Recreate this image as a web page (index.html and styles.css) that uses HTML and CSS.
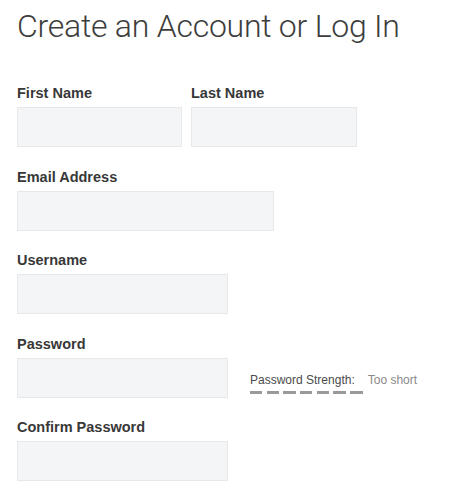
FILE: index.html
```html
<!DOCTYPE html>
<html lang="en">
<head>
<meta charset="utf-8">
<title>Create an Account or Log In</title>
<link rel="stylesheet" href="styles.css">
</head>
<body>
<div class="page">
  <h1 class="title">Create an Account or Log In</h1>
  <form class="form">
    <div class="row">
      <div class="field">
        <label class="label">First Name</label>
        <input class="input input-first" type="text">
      </div>
      <div class="field">
        <label class="label">Last Name</label>
        <input class="input input-last" type="text">
      </div>
    </div>
    <div class="field">
      <label class="label">Email Address</label>
      <input class="input input-email" type="email">
    </div>
    <div class="field">
      <label class="label">Username</label>
      <input class="input input-mid" type="text">
    </div>
    <div class="field">
      <label class="label">Password</label>
      <div class="pw-row">
        <input class="input input-mid" type="password">
        <div class="meter">
          <div class="meter-text"><span class="meter-label">Password Strength:</span><span class="meter-value">Too short</span></div>
          <div class="meter-bars">
            <span class="bar"></span><span class="bar"></span><span class="bar"></span><span class="bar"></span><span class="bar"></span><span class="bar"></span><span class="bar"></span>
          </div>
        </div>
      </div>
    </div>
    <div class="field">
      <label class="label">Confirm Password</label>
      <input class="input input-mid" type="password">
    </div>
  </form>
</div>
</body>
</html>
```

FILE: styles.css
```css
html, body {
  margin: 0;
  padding: 0;
  background: #ffffff;
}

.page {
  padding: 6px 0 0 17px;
  font-family: "Liberation Sans", Arial, sans-serif;
}

.title {
  margin: 0 0 39px 0;
  font-family: Roboto, "Liberation Sans", sans-serif;
  font-weight: 300;
  font-size: 32px;
  line-height: 40px;
  color: #3d3d3d;
  letter-spacing: -0.25px;
}

.form {
  display: flex;
  flex-direction: column;
  gap: 21.5px;
}

.row {
  display: flex;
  gap: 9px;
}

.field {
  display: flex;
  flex-direction: column;
}

.label {
  display: block;
  font-weight: bold;
  font-size: 14.5px;
  line-height: 17px;
  color: #383838;
  margin-bottom: 5px;
}

.input {
  box-sizing: border-box;
  height: 40px;
  margin: 0;
  padding: 0 8px;
  background: #f4f5f7;
  border: 1px solid #e7e8ea;
  border-radius: 0;
  outline: none;
}

.input-first { width: 165px; }
.input-last { width: 166px; }
.input-email { width: 257px; }
.input-mid { width: 211px; }

.pw-row {
  display: flex;
  align-items: flex-start;
}

.meter {
  margin-left: 22px;
  margin-top: 15.5px;
}

.meter-text {
  font-size: 12px;
  line-height: 14px;
  white-space: nowrap;
}

.meter-label {
  color: #4a4a4a;
}

.meter-value {
  color: #8a8a8a;
  margin-left: 13px;
}

.meter-bars {
  display: flex;
  gap: 4.3px;
  margin-top: 4px;
}

.bar {
  display: block;
  width: 12.4px;
  height: 3px;
  background: #9a9a9a;
}
```
